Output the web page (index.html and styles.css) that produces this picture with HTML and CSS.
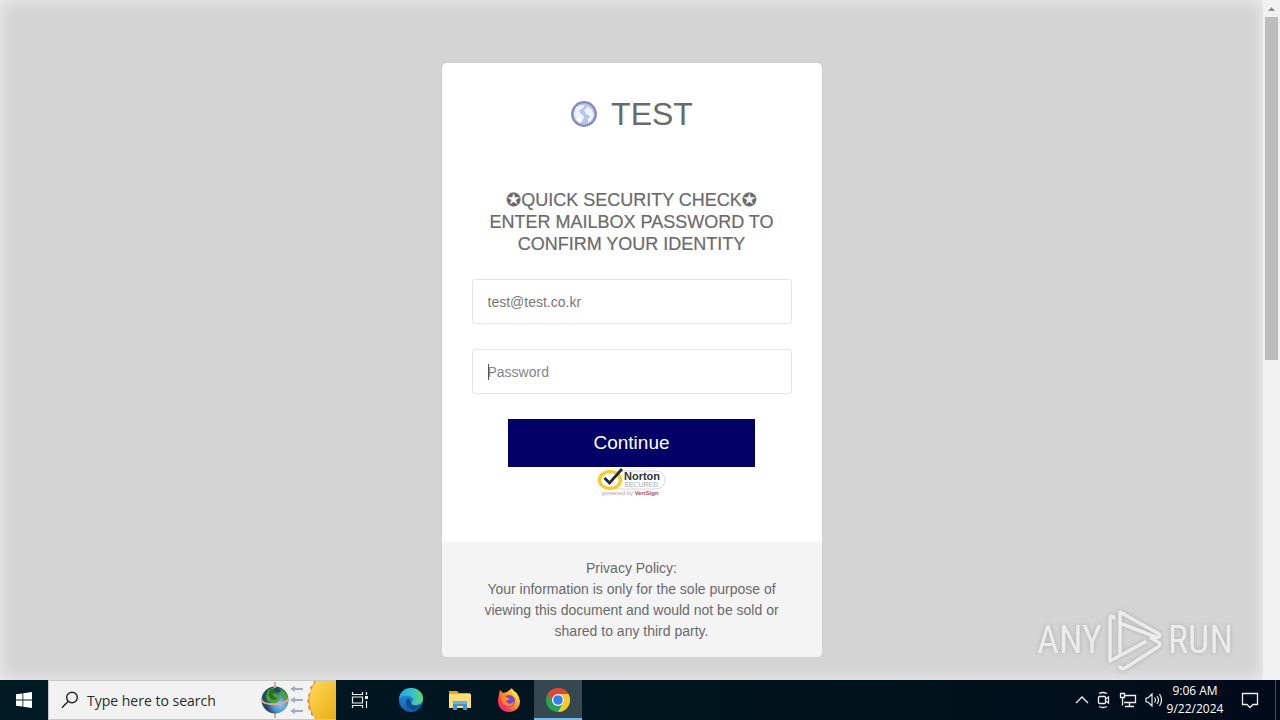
FILE: index.html
```html
<!DOCTYPE html>
<html lang="en">
<head>
<meta charset="utf-8">
<title>TEST</title>
<link rel="stylesheet" href="styles.css">
</head>
<body>
<div class="window">
  <main class="page">
    <section class="card">
      <div class="card-body">
        <h1 class="brand">
          <svg class="globe" width="28" height="28" viewBox="0 0 28 28" aria-hidden="true">
            <circle cx="14" cy="13" r="11.800" fill="#b9c4e4" stroke="#8489ba" stroke-width="2.200"/>
            <path d="M6 6l5-2 4 0-2 3-4 3 2 3 3 2-1 4-3 3-4-3-2-6zM17 5l5 4 2 5-3 6-3 2 0-4 2-3-4-2-2-4 2-1z" fill="#eef2fb"/>
            <path d="M9 16l3 4-2 2-3-3z" fill="#fff"/>
          </svg>
          <span>TEST</span>
        </h1>
        <h2 class="headline">✪QUICK SECURITY CHECK✪<br>ENTER MAILBOX PASSWORD TO CONFIRM YOUR IDENTITY</h2>
        <input class="field" type="email" aria-label="Email" value="test@test.co.kr">
        <div class="password">
          <input class="field" type="password" aria-label="Password" placeholder="Password">
          <span class="caret"></span>
        </div>
        <button class="continue" type="button">Continue</button>
        <svg class="seal" width="70" height="32" viewBox="0 0 70 32" role="img" aria-label="Norton Secured">
          <rect x="13" y="4" width="55" height="18" rx="9" fill="#fff" stroke="#d6d6d6"/>
          <ellipse cx="13" cy="13" rx="10.500" ry="8.500" fill="#fff" stroke="#f5cd31" stroke-width="3.500"/>
          <path d="M7.500 11l5 5L25 2" fill="none" stroke="#29292d" stroke-width="2.800"/>
          <text class="seal-name" x="27" y="13">Norton</text>
          <text class="seal-word" x="27" y="20" fill="#aaa">SECURED</text>
          <text class="seal-small" x="5" y="28" fill="#b89aa5">powered by <tspan class="seal-bold" fill="#ae4a6b">VeriSign</tspan></text>
        </svg>
      </div>
      <footer class="policy">Privacy Policy:<br>Your information is only for the sole purpose of viewing this document and would not be sold or shared to any third party.</footer>
    </section>
  </main>
  <div class="scrollbar">
    <svg width="17" height="17" viewBox="0 0 17 17" aria-hidden="true"><path d="M5 11l3.500-4 3.500 4z" fill="#8d8d8d"/></svg>
    <div class="thumb"></div>
  </div>
  <div class="watermark">
    <span>ANY</span>
    <svg width="58" height="64" viewBox="0 0 58 64" fill="none" stroke="#ececec" stroke-width="3.500" stroke-linejoin="round" stroke-linecap="round" aria-hidden="true">
      <path d="M8 10c-1-3-4-2-4 1v42l35-19M14 47V4l39 22c2 2-1 4-3 3L16 16M14 59c1 2 3 2 5 1l33-21c3-2 2-4 0-5l-7-4"/>
    </svg>
    <span>RUN</span>
  </div>
</div>
<nav class="taskbar">
  <button class="start" type="button" aria-label="Start">
    <svg width="16" height="16" viewBox="0 0 16 16" aria-hidden="true"><path d="M0 2.300l6.500-.9v6.200H0zM7.300 1.300L16 0v7.600H7.300zM0 8.400h6.500v6.200L0 13.700zM7.300 8.400H16V16l-8.700-1.300z" fill="#fff"/></svg>
  </button>
  <div class="search">
    <svg width="18" height="18" viewBox="0 0 18 18" fill="none" stroke="#222" stroke-width="1.400" aria-hidden="true"><circle cx="11" cy="6.500" r="5.300"/><path d="M7.200 10.300L1 16.800"/></svg>
    <input class="search-input" type="text" aria-label="Search" placeholder="Type here to search">
    <svg class="doodle" width="76" height="38" viewBox="0 0 76 38" aria-hidden="true">
      <defs>
        <radialGradient id="sea" cx=".7" cy=".65"><stop offset="0" stop-color="#8cc8f5"/><stop offset=".6" stop-color="#4b92c8"/><stop offset="1" stop-color="#214b60"/></radialGradient>
        <linearGradient id="sun" x2="1" y2="1"><stop stop-color="#ffd95a"/><stop offset="1" stop-color="#eaae15"/></linearGradient>
      </defs>
      <path d="M15 1v36" stroke="#c9776b" stroke-width="1.500"/>
      <circle cx="15" cy="19" r="13.500" fill="url(#sea)"/>
      <path d="M8 9l6-3-1 5 5 3 2 4-3 3-2 3-4-3-4-1-1-5zM19 7l5 3 4 6-1 5-4-2 0-4-4-2 2-3z" fill="#4aa52c"/>
      <path d="M10 8l5 0-2 6 4 4-5 1-4-5z" fill="#287221"/>
      <path d="M1 18c2 7 22 7 28 0M15 1v6M15 33v4" fill="none" stroke="#d9a79b" stroke-width="2"/>
      <g fill="#9daebf"><path d="M30 8l5-3v2h8v2h-8v2zM30 19l5-3v2h8v2h-8v2zM30 30l5-3v2h8v2h-8v2z"/></g>
      <path d="M76 0H54l-1 4-3 2 1 4-3 4 1 3-2 3 2 3-1 4 3 3 0 4 3 1 1 3h21z" fill="#e88220"/>
      <path d="M76 0H56C47 12 47 27 56 38h20z" fill="url(#sun)"/>
    </svg>
  </div>
  <button class="task" type="button" aria-label="Task View">
    <svg width="18" height="18" viewBox="0 0 18 18" fill="none" stroke="#e9eef0" stroke-width="1.200" aria-hidden="true"><path d="M1.500 1v2.500h10V1M1.500 17v-2.500h10V17M1.500 6h10v6h-10zM15.500 1v3M15.500 10v7"/><path d="M14 5h3v3h-3z" fill="#e9eef0" stroke="none"/></svg>
  </button>
  <button class="task edge" type="button" aria-label="Edge">
    <svg width="26" height="26" viewBox="0 0 26 26" aria-hidden="true">
      <defs><linearGradient id="e1" x2="1"><stop stop-color="#2b9fe0"/><stop offset=".5" stop-color="#32bfcf"/><stop offset="1" stop-color="#63d66c"/></linearGradient><linearGradient id="e2" x2="0" y2="1"><stop stop-color="#239be2"/><stop offset="1" stop-color="#145eb0"/></linearGradient></defs>
      <circle cx="13" cy="13" r="12" fill="url(#e2)"/>
      <path d="M1 12C2 4 8 1 13 1c7 0 12 5 12 10 0 5-4 7-8 7-3 0-4-1-3-3 2-2 1-5-3-6C7 8 3 9 1 12z" fill="url(#e1)"/>
      <path d="M10 11c-4 4-2 10 4 12 4 1 7-1 9-4-5 2-10 1-11-4-1-2 0-3-2-4z" fill="#134c8c"/>
      <path d="M13 11c-2 2-2 6 1 7 3 2 7 2 12-1v3l-3-1c-5 2-11 0-11-5 0-1 0-2 1-3z" fill="#061820"/>
    </svg>
  </button>
  <button class="task" type="button" aria-label="File Explorer">
    <svg width="24" height="24" viewBox="0 0 24 24" aria-hidden="true"><path d="M1 3h8l2 2h11v4H1z" fill="#e7a31b"/><path d="M1 6h22v14H1z" fill="#ffdc75"/><path d="M5 22v-8h14v8h-4v-4H9v4z" fill="#3d96d3"/><path d="M5 13h14v3H5z" fill="#5fb6ea"/></svg>
  </button>
  <button class="task" type="button" aria-label="Firefox">
    <svg width="26" height="26" viewBox="0 0 26 26" aria-hidden="true">
      <defs><linearGradient id="ff" x1="1" x2="0" y2="1"><stop stop-color="#fff050"/><stop offset=".45" stop-color="#ff9b21"/><stop offset=".75" stop-color="#ff3654"/><stop offset="1" stop-color="#db189e"/></linearGradient></defs>
      <path d="M3 7l1-4 3 3 4-1 5-4 1 5 3-1 3 5 1 4c0 7-5 11-11 11S2 21 2 14c0-3 1-5 1-7z" fill="url(#ff)"/>
      <circle cx="13" cy="14" r="6" fill="#7543d8"/><path d="M6 8l5 2 3 2-4 2c2 4 6 3 8 0 0 5-5 7-9 4-3-2-4-6-3-10z" fill="#ff8722"/><path d="M16 2c5 4 7 8 6 13-1-5-4-6-6-9z" fill="#ffdc38"/>
    </svg>
  </button>
  <button class="task active" type="button" aria-label="Chrome">
    <svg width="26" height="26" viewBox="0 0 26 26" aria-hidden="true"><circle cx="13" cy="13" r="12" fill="#29a253"/><path d="M2.600 7A12 12 0 0 1 23.400 7H13a6 6 0 0 0-5.200 9z" fill="#e64337"/><path d="M23.400 7A12 12 0 0 1 13 25l5.200-9A6 6 0 0 0 13 7z" fill="#fcc928"/><circle cx="13" cy="13" r="6" fill="#fff"/><circle cx="13" cy="13" r="4.800" fill="#367fed"/></svg>
  </button>
  <div class="tray">
    <svg width="14" height="10" viewBox="0 0 14 10" fill="none" stroke="#eee" stroke-width="1.400" aria-hidden="true"><path d="M1 8l6-6 6 6"/></svg>
    <svg width="14" height="18" viewBox="0 0 14 18" fill="none" stroke="#eee" stroke-width="1.300" aria-hidden="true"><rect x="1.500" y="5.500" width="7" height="7" rx="1"/><path d="M8.500 8l3-2v6l-3-2M2 2.500q4-2 8 0M2 15.500q4 2 8 0"/></svg>
    <svg width="18" height="16" viewBox="0 0 18 16" fill="none" stroke="#eee" stroke-width="1.300" aria-hidden="true"><path d="M6 3.500h10.500v7H5M10.500 11v3M6 14.500h9M1.500 1.500h4v4h-4zM3.500 5.500v8"/></svg>
    <svg width="18" height="16" viewBox="0 0 18 16" fill="none" stroke="#eee" stroke-width="1.200" aria-hidden="true"><path d="M1 6h2l4-4v12l-4-4H1zM9.500 5.500q2 2.500 0 5M12 4q3 4 0 8M14.500 2q4 6 0 12"/></svg>
  </div>
  <div class="clock"><time>9:06 AM</time><time>9/22/2024</time></div>
  <button class="notice" type="button" aria-label="Notifications">
    <svg width="18" height="18" viewBox="0 0 18 18" fill="none" stroke="#eee" stroke-width="1.300" aria-hidden="true"><path d="M1.500 2.500h15v11H12L9 16.500l-3-3H1.500z"/></svg>
  </button>
  <div class="desktop"></div>
</nav>
</body>
</html>
```
FILE: styles.css
```css
* { box-sizing: border-box; }
body {
  margin: 0;
  height: 100vh;
  display: flex;
  flex-direction: column;
  overflow: hidden;
  font-family: "Liberation Sans", Arial, sans-serif;
  color: #6a6a6a;
}
button, input { font: inherit; color: inherit; }
button { border: 0; padding: 0; background: none; }
.window { position: relative; flex: 1; min-height: 0; display: flex; overflow: hidden; }
.page {
  flex: 1;
  display: flex;
  justify-content: center;
  align-items: flex-start;
  padding: 63px 20px 20px;
  background: #d4d4d4;
  box-shadow: inset 0 0 15px #f0f0f0;
}
.card {
  width: 100%;
  max-width: 380px;
  border-radius: 5px;
  overflow: hidden;
  background: #fff;
  box-shadow: 0 0 3px #cacaca;
}
.card-body {
  display: flex;
  flex-direction: column;
  align-items: center;
  padding: 32px 30px 43px;
}
.brand {
  display: flex;
  align-items: center;
  gap: 13px;
  margin: 0 0 55px;
  font-size: 32px;
  line-height: 39px;
  font-weight: 400;
}
.headline {
  margin: 0 0 24px;
  font-family: "Liberation Sans", "DejaVu Sans", sans-serif;
  font-size: 18px;
  line-height: 22px;
  font-weight: 400;
  text-align: center;
  -webkit-text-stroke: 0.2px #6a6a6a;
}
.field {
  display: block;
  width: 100%;
  height: 45px;
  margin-bottom: 25px;
  padding: 0 15px;
  border: 1px solid #e5e5e5;
  border-radius: 3px;
  outline: 0;
  background: #fff;
  font-size: 14px;
  color: #777;
}
.field::placeholder { color: #858585; opacity: 1; }
.password { position: relative; width: 100%; }
.caret { position: absolute; left: 16px; top: 15px; width: 1px; height: 16px; background: #555; }
.continue {
  width: 77%;
  height: 48px;
  background: #000066;
  color: #fff;
  font-size: 19px;
}
.seal-name { font-size: 11px; font-weight: 700; fill: #333; }
.seal-word { font-size: 7px; }
.seal-small { font-size: 6px; }
.seal-bold { font-weight: 700; }
.policy {
  padding: 16px 30px 15px;
  background: #f4f4f4;
  font-size: 14px;
  line-height: 21px;
  text-align: center;
}
.scrollbar { width: 17px; background: #f1f1f1; display: flex; flex-direction: column; align-items: center; }
.scrollbar svg { flex: none; }
.thumb { width: 13px; height: calc(50% + 3px); background: #bcbcbc; }
.watermark {
  position: absolute;
  right: 47px;
  bottom: 8px;
  display: flex;
  align-items: center;
  gap: 4px;
  color: #ececec;
  font-family: "Roboto Condensed", "Liberation Sans Narrow", Roboto, sans-serif;
  font-size: 38px;
  filter: drop-shadow(0 0 2px #aaa);
}
.taskbar {
  flex: none;
  height: 40px;
  display: flex;
  background: linear-gradient(90deg, #001923, #00131d 70%, #020a1b);
  color: #fff;
}
.start { width: 48px; display: grid; place-items: center; }
.search {
  width: 288px;
  display: flex;
  align-items: center;
  padding-left: 12px;
  background: #f2f2f2;
  border: 1px solid #c6c6c6;
  border-right: 0;
}
.search-input {
  flex: 1;
  min-width: 0;
  padding: 0 0 0 8px;
  border: 0;
  outline: 0;
  background: none;
  font-family: "Open Sans", "Noto Sans", sans-serif;
  font-size: 14px;
}
.search-input::placeholder { color: #2b2b2b; opacity: 1; }
.doodle { flex: none; }
.task { width: 48px; display: grid; place-items: center; margin-right: 1px; }
.edge { margin-left: 2px; }
.active { background: #35474f; border-bottom: 2px solid #76b9ed; padding-top: 2px; }
.tray { margin-left: auto; display: flex; align-items: center; gap: 8px; margin-right: -2px; }
.tray svg { flex: none; }
.clock {
  width: 68px;
  display: flex;
  flex-direction: column;
  justify-content: center;
  text-align: center;
  font-family: "Open Sans", "Noto Sans", sans-serif;
  font-size: 12px;
  line-height: 18px;
}
.notice { width: 41px; display: grid; place-items: center; }
.desktop { width: 10px; background: linear-gradient(90deg, transparent 5px, #4a5260 5px, #4a5260 6px, transparent 6px); }
```
